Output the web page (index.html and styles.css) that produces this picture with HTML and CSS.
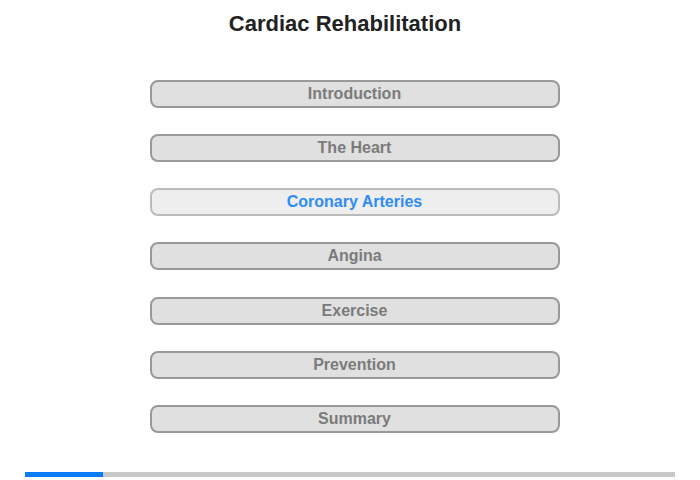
FILE: index.html
```html
<!DOCTYPE html>
<html lang="en">
<head>
    <meta charset="UTF-8">
    <title>Cardiac Rehabilitation</title>
    <link rel="stylesheet" href="styles.css">
</head>
<body>

<h1 class="title">Cardiac Rehabilitation</h1>

<nav class="menu">
    <a class="menu-item" href="#">Introduction</a>
    <a class="menu-item" href="#">The Heart</a>
    <a class="menu-item active" href="#">Coronary Arteries</a>
    <a class="menu-item" href="#">Angina</a>
    <a class="menu-item" href="#">Exercise</a>
    <a class="menu-item" href="#">Prevention</a>
    <a class="menu-item" href="#">Summary</a>
</nav>

<div class="progress">
    <div class="progress-fill" style="width: 12%;"></div>
</div>

</body>
</html>
```

FILE: styles.css
```css
* {
    margin: 0;
    padding: 0;
    box-sizing: border-box;
}
body {
    font-family: 'Liberation Sans', Arial, sans-serif;
    background-color: #fff;
    width: 700px;
    height: 480px;
    padding-top: 11px;
}
.title {
    font-size: 22px;
    line-height: 26px;
    font-weight: bold;
    color: #222;
    text-align: center;
    padding-right: 10px;
}
.menu {
    display: flex;
    flex-direction: column;
    align-items: center;
    gap: 26.15px;
    margin-top: 43px;
    padding-left: 9px;
}
.menu-item {
    display: block;
    width: 410px;
    height: 28px;
    line-height: 24px;
    border: 2px solid #999;
    border-radius: 8px;
    background-color: #e0e0e0;
    color: #7b7b7b;
    font-size: 16px;
    font-weight: bold;
    text-align: center;
    text-decoration: none;
}
.menu-item.active {
    background-color: #eee;
    border-color: #bbb;
    color: #2f8cf5;
}
.progress {
    margin: 39px 25px 0;
    height: 5px;
    background-color: #c8c8c8;
}
.progress-fill {
    height: 100%;
    background-color: #0a7cf7;
}
```
